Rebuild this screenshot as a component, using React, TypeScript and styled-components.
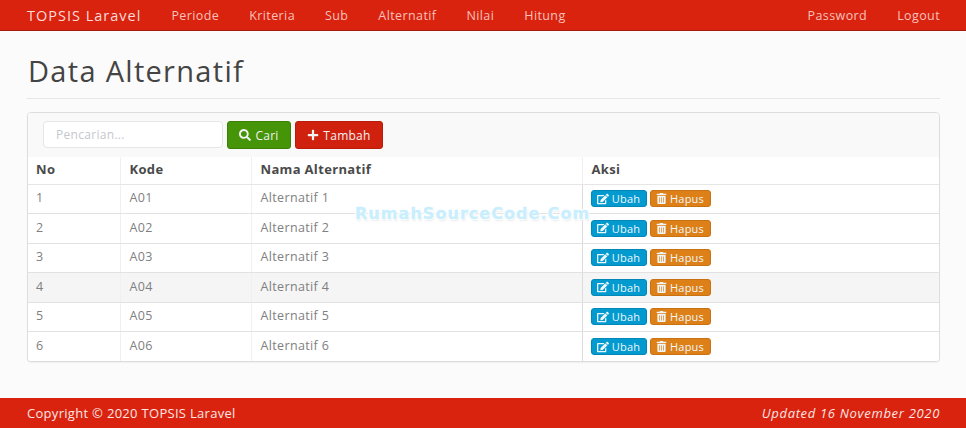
import React from 'react';
import styled, { createGlobalStyle } from 'styled-components';
import { FaSearch, FaPlus, FaEdit, FaTrashAlt } from 'react-icons/fa';

const GlobalStyle = createGlobalStyle`
  html, body {
    margin: 0;
    padding: 0;
    background: #fbfbfb;
    font-family: "Open Sans", "Liberation Sans", sans-serif;
    color: #555;
  }
  * { box-sizing: border-box; }
`;

const Page = styled.div`
  position: relative;
  width: 966px;
  height: 428px;
  display: flex;
  flex-direction: column;
  overflow: hidden;
`;

const Navbar = styled.nav`
  height: 31px;
  flex: none;
  display: flex;
  align-items: center;
  justify-content: space-between;
  padding: 0 26px 0 27px;
  background: #d9230f;
  border-bottom: 1px solid #a91b0c;
`;

const NavGroup = styled.div`
  display: flex;
  align-items: center;
  gap: 30px;
`;

const Brand = styled.span`
  font-size: 14.5px;
  color: #fbdcd8;
  letter-spacing: 1px;
`;

const NavLink = styled.a`
  font-size: 12.5px;
  letter-spacing: 0.4px;
  color: #f7c1ba;
`;

const Main = styled.main`
  flex: 1;
  padding: 0 26px 0 27px;
`;

const PageHeader = styled.h1`
  margin: 0;
  height: 68px;
  padding: 22px 0 0 1px;
  font-size: 29px;
  line-height: 36px;
  font-weight: 400;
  color: #444;
  border-bottom: 1px solid #e6e6e6;
  letter-spacing: 1.3px;
`;

const Panel = styled.section`
  margin-top: 13px;
  background: #fff;
  border: 1px solid #dddddd;
  border-radius: 4px;
  box-shadow: 0 1px 1px rgba(0, 0, 0, 0.05);
  overflow: hidden;
`;

const Toolbar = styled.div`
  height: 44px;
  display: flex;
  align-items: flex-start;
  gap: 4px;
  padding: 8px 0 0 15px;
  background: #f9f9f9;
`;

const SearchInput = styled.input`
  width: 180px;
  height: 27px;
  padding: 0 12px;
  border: 1px solid #e6e6e6;
  border-radius: 4px;
  background: #fff;
  font-family: inherit;
  font-size: 12px;
  letter-spacing: 0.3px;
  outline: none;
  &::placeholder { color: #c4c8cc; }
`;

const Button = styled.button<{ $bg: string; $edge: string; $wide: number }>`
  width: ${({ $wide }) => $wide}px;
  height: 28px;
  padding: 0;
  display: inline-flex;
  align-items: center;
  justify-content: center;
  gap: 4px;
  border: 1px solid ${({ $edge }) => $edge};
  border-radius: 3px;
  background: ${({ $bg }) => $bg};
  color: #f2f2f2;
  font-family: inherit;
  font-size: 12px;
  letter-spacing: 0.25px;
`;

const Table = styled.table`
  width: 100%;
  border-collapse: collapse;
  table-layout: fixed;
  font-size: 12.5px;
  letter-spacing: 0.35px;
`;

const HeadCell = styled.th<{ $w?: number }>`
  width: ${({ $w }) => ($w ? `${$w}px` : 'auto')};
  height: 27px;
  padding: 0 0 2px 8px;
  text-align: left;
  font-weight: 700;
  font-size: 13px;
  letter-spacing: 0.33px;
  color: #4a4a4a;
  border-right: 1px solid #f0f0f0;
  border-bottom: 1px solid #e6e6e6;
  &:nth-child(n + 2) { padding-left: 9px; }
  &:last-child { border-right: 0; }
`;

const Row = styled.tr<{ $hover?: boolean }>`
  background: ${({ $hover }) => ($hover ? '#f5f5f5' : '#fff')};
`;

const Cell = styled.td`
  height: 29.5px;
  padding: 0 0 2px 8px;
  color: #808080;
  border-right: 1px solid #f0f0f0;
  border-bottom: 1px solid #e2e2e2;
  vertical-align: middle;
  &:nth-child(2) { padding-left: 9px; }
  &:nth-child(3) { padding-left: 9px; border-right: 1px solid #dcdcdc; }
  &:last-child { border-right: 0; }
  tr:last-child & { border-bottom: 0; }
`;

const Actions = styled.div`
  display: flex;
  gap: 3px;
  padding-top: 2px;
`;

const SmallButton = styled.a<{ $bg: string; $edge: string; $wide: number }>`
  width: ${({ $wide }) => $wide}px;
  height: 17px;
  display: inline-flex;
  align-items: center;
  justify-content: center;
  gap: 3px;
  border: 1px solid ${({ $edge }) => $edge};
  border-radius: 3px;
  background: ${({ $bg }) => $bg};
  color: #eef6fa;
  font-size: 11px;
  letter-spacing: 0.2px;
`;

const Watermark = styled.div`
  position: absolute;
  left: 355px;
  top: 204px;
  font-family: "DejaVu Sans", sans-serif;
  font-size: 16px;
  font-weight: 700;
  line-height: 20px;
  letter-spacing: 1.05px;
  color: #c9eefd;
  -webkit-text-stroke: 0.3px #c9eefd;
  text-shadow: 1px 1px 1px #fff, -1px -1px 1px #fff, 1px -1px 1px #fff, -1px 1px 1px #fff, 1px 2px 2px #e8e8e8;
  white-space: nowrap;
`;

const Footer = styled.footer`
  height: 30px;
  flex: none;
  display: flex;
  align-items: center;
  justify-content: space-between;
  padding: 0 26px 0 27px;
  background: #d9230f;
  color: #fbe6e3;
  font-size: 13px;
  letter-spacing: 0.3px;
`;

const Updated = styled.em`
  font-style: italic;
  letter-spacing: 0.68px;
`;

const rows = [1, 2, 3, 4, 5, 6];

export default function App() {
  return (
    <Page>
      <GlobalStyle />
      <Navbar>
        <NavGroup>
          <Brand>TOPSIS Laravel</Brand>
          <NavLink>Periode</NavLink>
          <NavLink>Kriteria</NavLink>
          <NavLink>Sub</NavLink>
          <NavLink>Alternatif</NavLink>
          <NavLink>Nilai</NavLink>
          <NavLink>Hitung</NavLink>
        </NavGroup>
        <NavGroup>
          <NavLink>Password</NavLink>
          <NavLink>Logout</NavLink>
        </NavGroup>
      </Navbar>
      <Main>
        <PageHeader>Data Alternatif</PageHeader>
        <Panel>
          <Toolbar>
            <SearchInput placeholder="Pencarian..." />
            <Button $bg="#469408" $edge="#3d8006" $wide={64}>
              <FaSearch size={12} /> Cari
            </Button>
            <Button $bg="#d0210e" $edge="#b81d0c" $wide={88}>
              <FaPlus size={12} /> Tambah
            </Button>
          </Toolbar>
          <Table>
            <thead>
              <tr>
                <HeadCell $w={92}>No</HeadCell>
                <HeadCell $w={131}>Kode</HeadCell>
                <HeadCell $w={331}>Nama Alternatif</HeadCell>
                <HeadCell>Aksi</HeadCell>
              </tr>
            </thead>
            <tbody>
              {rows.map((n) => (
                <Row key={n} $hover={n === 4}>
                  <Cell>{n}</Cell>
                  <Cell>A0{n}</Cell>
                  <Cell>Alternatif {n}</Cell>
                  <Cell>
                    <Actions>
                      <SmallButton $bg="#029acf" $edge="#0287b6" $wide={56}>
                        <FaEdit size={12} /> Ubah
                      </SmallButton>
                      <SmallButton $bg="#dd8018" $edge="#c97214" $wide={61}>
                        <FaTrashAlt size={11} /> Hapus
                      </SmallButton>
                    </Actions>
                  </Cell>
                </Row>
              ))}
            </tbody>
          </Table>
        </Panel>
      </Main>
      <Footer>
        <span>Copyright © 2020 TOPSIS Laravel</span>
        <Updated>Updated 16 November 2020</Updated>
      </Footer>
      <Watermark>RumahSourceCode.Com</Watermark>
    </Page>
  );
}
